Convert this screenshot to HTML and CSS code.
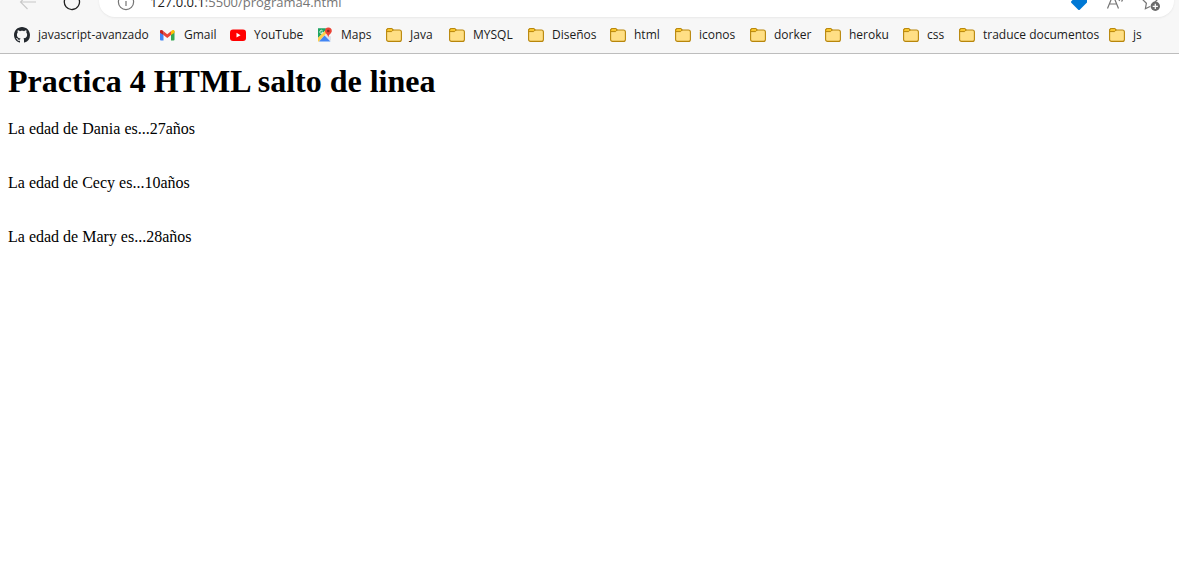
FILE: index.html
```html
<!DOCTYPE html>
<html lang="es">
<head>
<meta charset="utf-8">
<title>programa4.html</title>
<link rel="stylesheet" href="styles.css">
</head>
<body>
<svg class="defs" aria-hidden="true">
  <symbol id="folder" viewBox="0 0 16 16">
    <path d="M.6 3.5Q.6 1.500 2.600 1.500H5.600L7.400 3H13.400Q15.400 3 15.400 5V12.400Q15.400 14.400 13.400 14.400H2.600Q.6 14.400.6 12.400Z" fill="#ffdf85" stroke="#b8860b" stroke-width="1.100"/>
    <path d="M.6 4.600V3.500Q.6 1.500 2.600 1.500H5.600L7.200 3 5.600 4.600Z" fill="#f8c62f" stroke="#b8860b"/>
  </symbol>
</svg>
<header class="browser">
  <div class="toolbar">
    <button class="tool" aria-label="Atrás"><svg width="18" height="18" viewBox="0 0 18 18" fill="none" stroke="#c8c8c8" stroke-width="1.1"><path d="M17 9H1.5M8.5 2 1.5 9l7 7"/></svg></button>
    <button class="tool" aria-label="Actualizar"><svg width="18" height="18" viewBox="0 0 18 18" fill="none" stroke="#202020" stroke-width="1.3"><path d="M16 6.2A7.6 7.6 0 1 1 12.8 2.4M16.2 1v5h-5"/></svg></button>
    <div class="address">
      <svg width="18" height="18" viewBox="0 0 18 18" fill="none" stroke="#757575" stroke-width="1.2"><circle cx="9" cy="9" r="7.6"/><path d="M9 8v5M9 5v1.5"/></svg>
      <div class="url"><span class="host">127.0.0.1</span>:5500/programa4.html</div>
      <button class="tool" aria-label="Compras"><svg width="18" height="18" viewBox="0 0 18 18"><path d="M9 1h7q1 0 1 1v7.500L10 16.500q-1 1-2 0L1.500 10q-1-1 0-2Z" fill="#0078d4"/></svg></button>
      <button class="tool" aria-label="Leer en voz alta"><svg width="18" height="18" viewBox="0 0 18 18" fill="none" stroke="#757575" stroke-width="1.2"><path d="M1.500 15.500 7 2l5.500 13.500M3.500 11h7M13 3q2 2 0 5M15.500 1.500q2.500 4 0 7"/></svg></button>
      <button class="tool" aria-label="Agregar a favoritos"><svg width="18" height="18" viewBox="0 0 18 18"><path d="m8 1 2.300 4.800 5.200.7-3.700 3.700M8 1 5.700 5.800.6 6.500l3.800 3.700-1 5.500L8 13.500" fill="none" stroke="#757575" stroke-width="1.200"/><circle cx="13.300" cy="13.300" r="4.700" fill="#6b6b6b"/><path d="M13.300 10.700v5.200M10.700 13.300h5.200" stroke="#fff" stroke-width="1.200"/></svg></button>
    </div>
  </div>
  <nav class="bookmarks" aria-label="Favoritos">
    <a href="#"><svg viewBox="0 0 16 16"><path fill="#24292f" d="M8 0C3.580 0 0 3.580 0 8c0 3.540 2.290 6.530 5.470 7.590.4.070.55-.17.55-.38 0-.19-.01-.82-.01-1.490-2.010.37-2.530-.49-2.690-.94-.09-.23-.48-.94-.82-1.130-.28-.15-.68-.52-.01-.53.63-.01 1.080.58 1.230.82.72 1.210 1.870.87 2.330.66.07-.52.28-.87.51-1.070-1.780-.2-3.640-.89-3.640-3.950 0-.87.31-1.590.82-2.150-.08-.2-.36-1.020.08-2.120 0 0 .67-.21 2.200.82.64-.18 1.320-.27 2-.27s1.360.09 2 .27c1.530-1.040 2.200-.82 2.200-.82.44 1.100.16 1.920.08 2.120.51.56.82 1.270.82 2.150 0 3.070-1.870 3.750-3.650 3.950.29.25.54.73.54 1.480 0 1.070-.01 1.930-.01 2.200 0 .21.15.46.55.38A8.010 8.010 0 0 0 16 8c0-4.420-3.580-8-8-8Z"/></svg>javascript-avanzado</a>
    <a href="#"><svg viewBox="0 0 16 16"><path fill="#4285f4" d="M0 4v8.500q0 1 1 1h2.500V6Z"/><path fill="#34a853" d="M14.500 4v8.500q0 1-1 1H11V6Z"/><path fill="#ea4335" d="M3.500 4.200 7.250 7.200 11 4.200v3.900l-3.750 3L3.500 8.100Z"/><path fill="#c5221f" d="M0 4.500c0-2 2-1.900 3.500-.3v3.900L0 5.700Z"/><path fill="#fbbc04" d="M14.500 4.500c0-2-2-1.900-3.500-.3v3.900l3.500-2.400Z"/></svg>Gmail</a>
    <a href="#"><svg viewBox="0 0 16 16"><rect y="2.500" width="16" height="11.500" rx="3" fill="#f00"/><path d="m6.500 5.800 4 2.400-4 2.400Z" fill="#fff"/></svg>YouTube</a>
    <a href="#"><svg viewBox="0 0 16 16"><path fill="#dfe3e7" d="M9 7 14 9.500V14L7 9Z"/><path fill="#1fa463" d="M1 1.500h9L1 11Z"/><path fill="#ffd04b" d="m1 10.500 8-8 2 2-9 10H1Z"/><path fill="#4285f4" d="M2 14.500 7.500 8.500l6 6Z"/><path fill="#1fa463" d="M1 1.500h7.500v1.500L1 10.500Z"/><path d="M5.500 3.700A1.600 1.600 0 1 0 6 5.200H4.500" fill="none" stroke="#fff" stroke-width=".8"/><path fill="#ea4335" d="M11.300.5A3.500 3.500 0 0 0 8 4c0 2.500 2.800 3 3.300 6.500C11.800 7 14.800 6.500 14.800 4A3.500 3.500 0 0 0 11.300.5Z"/><circle cx="11.300" cy="4" r="1.300" fill="#8c2a22"/></svg>Maps</a>
    <a href="#"><svg><use href="#folder"/></svg>Java</a>
    <a href="#"><svg><use href="#folder"/></svg>MYSQL</a>
    <a href="#"><svg><use href="#folder"/></svg>Diseños</a>
    <a href="#"><svg><use href="#folder"/></svg>html</a>
    <a href="#"><svg><use href="#folder"/></svg>iconos</a>
    <a href="#"><svg><use href="#folder"/></svg>dorker</a>
    <a href="#"><svg><use href="#folder"/></svg>heroku</a>
    <a href="#"><svg><use href="#folder"/></svg>css</a>
    <a href="#"><svg><use href="#folder"/></svg>traduce documentos</a>
    <a href="#"><svg><use href="#folder"/></svg>js</a>
  </nav>
</header>
<main class="page">
  <h1>Practica 4 HTML salto de linea</h1>
  <p>La edad de Dania es...27años</p>
  <p>La edad de Cecy es...10años</p>
  <p>La edad de Mary es...28años</p>
</main>
</body>
</html>
```
FILE: styles.css
```css
body {
  margin: 0;
  background: #fff;
  color: #000;
}

.defs {
  display: none;
}

.browser {
  background: #f7f7f7;
  border-bottom: 1px solid #bdbdbd;
  font-family: "Open Sans", "Noto Sans", sans-serif;
}

.toolbar {
  display: flex;
  align-items: flex-end;
  height: 17px;
  padding: 0 5px 0 19px;
}

.tool {
  display: flex;
  align-items: center;
  justify-content: center;
  flex: none;
  height: 30px;
  width: 18px;
  padding: 0;
  border: 0;
  background: none;
}

.toolbar > .tool {
  margin-right: 26px;
}

.toolbar > .tool + .tool {
  margin-right: 18px;
}

.address {
  display: flex;
  flex: 1;
  align-items: center;
  gap: 18px;
  height: 30px;
  padding: 0 14px 0 18px;
  border-radius: 0 0 16px 16px;
  background: #fff;
  box-shadow: 0 1px 2px #e8e8e8;
}

.url {
  flex: 1;
  margin-left: -3px;
  font-size: 13px;
  line-height: 20px;
  color: #757575;
}

.host {
  color: #1b1b1b;
}

.bookmarks {
  display: grid;
  grid-template-columns: 146px 70px 87px 69px 63px 79px 82px 65px 75px 75px 78px 56px 150px auto;
  align-items: center;
  height: 36px;
  padding-left: 14px;
  overflow: hidden;
}

.bookmarks a {
  display: flex;
  align-items: center;
  gap: 8px;
  color: #1b1b1b;
  font-size: 12px;
  line-height: 16px;
  text-decoration: none;
  white-space: nowrap;
}

.bookmarks svg {
  flex: none;
  width: 16px;
  height: 16px;
}

.page {
  padding: 9px 8px 8px;
  font-family: "Liberation Serif", "Times New Roman", serif;
  font-size: 16px;
  line-height: 18px;
}

.page h1 {
  margin: 0 0 20px;
  font-size: 32px;
  line-height: 37px;
}

.page p {
  margin: 0 0 36px;
}
```
